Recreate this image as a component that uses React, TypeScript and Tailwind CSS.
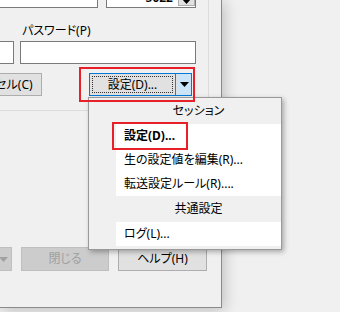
import React from "react";

const Arrow = ({ color = "#000" }: { color?: string }) => (
  <svg width="9" height="5" viewBox="0 0 9 5">
    <path d="M0 0h9L4.5 5z" fill={color} />
  </svg>
);

const menuItems = [
  { kind: "header", label: "セッション" },
  { kind: "item", label: "設定(D)...", bold: true },
  { kind: "item", label: "生の設定値を編集(R)..." },
  { kind: "item", label: "転送設定ルール(R)...." },
  { kind: "header", label: "共通設定" },
  { kind: "item", label: "ログ(L)..." },
];

export default function App() {
  return (
    <div className="relative w-[340px] h-[312px] overflow-hidden bg-[#f0f0f0] text-[12px] leading-[14px] text-black font-['Noto_Sans','Noto_Sans_CJK_JP',sans-serif] [font-feature-settings:'palt']">
      {/* dialog window */}
      <div className="w-[222px] h-[308px] bg-[#f0f0f0] border-r border-b border-[#8a8a8a] shadow-[2px_2px_14px_rgba(0,0,0,0.22)]">
        {/* group box */}
        <div className="w-[209px] h-[111px] border-r border-b border-[#dcdcdc]">
          <div className="flex items-end h-[8px]">
            <div className="-ml-[2px] w-[100px] h-[24px] shrink-0 border border-[#7a7a7a] bg-white" />
            <div className="ml-[8px] w-[90px] h-[24px] shrink-0 border border-[#7a7a7a] bg-white flex items-end justify-end">
              <span className="mb-[2px] mr-[5px] font-semibold">5022</span>
              <div className="mb-[1px] w-[17px] h-[20px] bg-[#e1e1e1] border border-[#adadad] flex items-end justify-center pb-[1px]">
                <Arrow />
              </div>
            </div>
          </div>

          <div className="mt-[16px] pl-[22px]">パスワード(P)</div>

          <div className="flex mt-[3px] h-[23px]">
            <div className="-ml-[2px] w-[16px] shrink-0 border border-[#7a7a7a] bg-white" />
            <div className="ml-[6px] w-[176px] shrink-0 border border-[#7a7a7a] bg-white" />
          </div>

          <div className="flex mt-[9px] h-[23px]">
            <div className="-ml-[46px] w-[88px] shrink-0 border border-[#adadad] bg-[#e1e1e1] flex items-center justify-center">
              キャンセル(C)
            </div>
            <div className="ml-[47px] w-[103px] shrink-0 flex border border-[#0078d7] bg-[#cce4f7]">
              <div className="flex-1 p-[2px] bg-[#e1e1e1]">
                <div className="h-full border border-dotted border-[#333] flex items-center justify-center">
                  設定(D)...
                </div>
              </div>
              <div className="w-[2px] bg-[#6d6d6d] border-r border-[#e1e1e1]" />
              <div className="w-[14px] flex items-center justify-center">
                <Arrow />
              </div>
            </div>
          </div>
        </div>

        <div className="flex mt-[136px] h-[24px]">
          <div className="-ml-[10px] w-[22px] shrink-0 border border-[#bfbfbf] bg-[#cccccc] flex items-center justify-end pr-[3px]">
            <Arrow color="#a0a0a0" />
          </div>
          <div className="ml-[9px] w-[88px] shrink-0 border border-[#bfbfbf] bg-[#cccccc] text-[#a0a0a0] flex items-center justify-center">
            閉じる
          </div>
          <div className="ml-[9px] w-[89px] shrink-0 border border-[#adadad] bg-[#e1e1e1] flex items-center justify-center">
            ヘルプ(H)
          </div>
        </div>
      </div>

      {/* dropdown menu */}
      <div className="absolute left-[88px] top-[97px] w-[194px] h-[153px] border border-[#999999] bg-[#f0f0f0] pt-[0px] shadow-[2px_2px_5px_rgba(0,0,0,0.3)]">
        {menuItems.map((m, i) =>
          m.kind === "header" ? (
            <div key={i} className="flex h-[26px]">
              <div className="w-[27px] shrink-0" />
              <div className="flex-1 flex items-center justify-center">{m.label}</div>
            </div>
          ) : (
            <div key={i} className="flex h-[24px]">
              <div className="w-[27px] shrink-0" />
              <div className={`flex-1 bg-white flex items-center pl-[8px] ${m.bold ? "font-bold" : ""}`}>
                {m.label}
              </div>
            </div>
          )
        )}
      </div>

      {/* red highlight boxes */}
      <div className="absolute left-[79px] top-[67px] w-[116px] h-[35px] border-2 border-[#e8202a]" />
      <div className="absolute left-[112px] top-[122px] w-[76px] h-[28px] border-2 border-[#e8202a]" />
    </div>
  );
}
